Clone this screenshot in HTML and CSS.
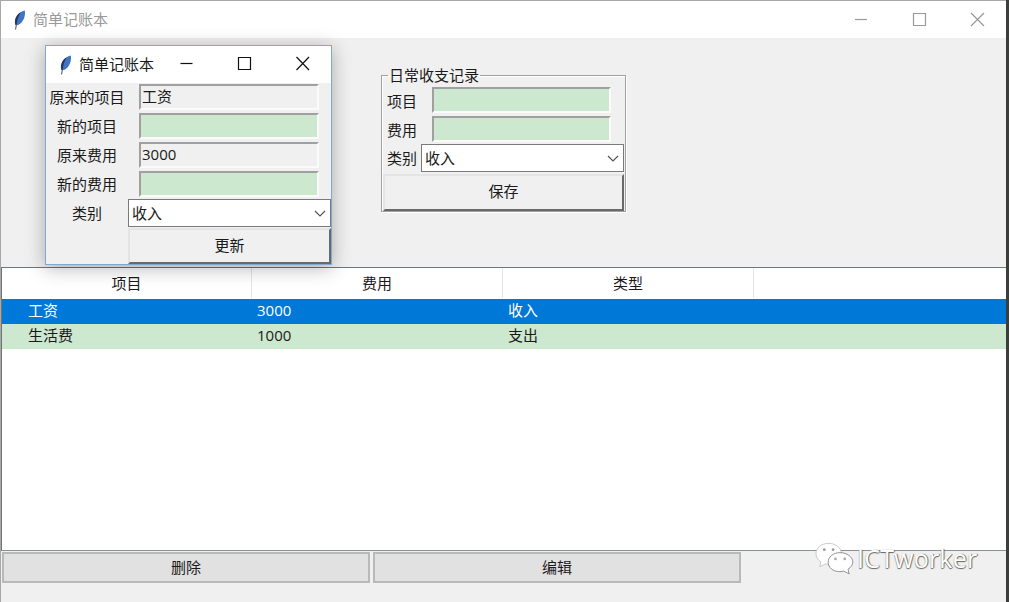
FILE: index.html
```html
<!DOCTYPE html>
<html lang="zh-CN">
<head>
    <meta charset="UTF-8">
    <title>简单记账本</title>
    <link rel="stylesheet" href="styles.css">
</head>
<body>
    <div class="window">
        <div class="titlebar">
            <svg class="feather" viewBox="0 0 16 20"><path d="M3.500 19.500 L4.500 14" stroke="#666" stroke-width="1.200" fill="none"/><path d="M3.500 15 C1.500 9.500 6 2 12.800 .5 C13.800 6.500 11 13 6 15 Z" fill="#3f74c4"/><path d="M3.500 15 C1.500 9.500 5 4 9 2 C6.500 6 5 10 4.800 14.500 Z" fill="#26385c"/></svg>
            <span class="title title-inactive">简单记账本</span>
            <div class="controls controls-inactive">
                <svg viewBox="0 0 58 37"><path d="M23 18.500 H35"/></svg>
                <svg viewBox="0 0 58 37"><path d="M23.500 12.500 H35.500 V24.500 H23.500 Z"/></svg>
                <svg viewBox="0 0 58 37"><path d="M23 12 L36 25 M36 12 L23 25"/></svg>
            </div>
        </div>

        <div class="top-panel">
            <fieldset class="record-frame">
                <legend>日常收支记录</legend>
                <div class="row"><span class="rec-label">项目</span><div class="entry entry-green"></div></div>
                <div class="row row-tight"><span class="rec-label">费用</span><div class="entry entry-green"></div></div>
                <div class="row combo-row">
                    <span class="rec-label-short">类别</span>
                    <div class="combo"><span>收入</span><svg viewBox="0 0 12 7"><path d="M1 1 L6 6 L11 1"/></svg></div>
                </div>
                <div class="btn save-btn">保存</div>
            </fieldset>
        </div>

        <div class="tree">
            <div class="tree-head">
                <div class="head-cell">项目</div>
                <div class="head-cell">费用</div>
                <div class="head-cell">类型</div>
                <div class="head-rest"></div>
            </div>
            <div class="tree-row selected"><span class="c1">工资</span><span class="c2">3000</span><span>收入</span></div>
            <div class="tree-row striped"><span class="c1">生活费</span><span class="c2">1000</span><span>支出</span></div>
        </div>

        <div class="bottom-bar">
            <div class="flat-btn">删除</div>
            <div class="flat-btn">编辑</div>
        </div>
    </div>

    <div class="popup">
        <div class="titlebar popup-bar">
            <svg class="feather" viewBox="0 0 16 20"><path d="M3.500 19.500 L4.500 14" stroke="#666" stroke-width="1.200" fill="none"/><path d="M3.500 15 C1.500 9.500 6 2 12.800 .5 C13.800 6.500 11 13 6 15 Z" fill="#3f74c4"/><path d="M3.500 15 C1.500 9.500 5 4 9 2 C6.500 6 5 10 4.800 14.500 Z" fill="#26385c"/></svg>
            <span class="title">简单记账本</span>
            <div class="controls">
                <svg viewBox="0 0 58 37"><path d="M23.500 17.500 H35.500"/></svg>
                <svg viewBox="0 0 58 37"><path d="M23.500 11.500 H35.500 V23.500 H23.500 Z"/></svg>
                <svg viewBox="0 0 58 37"><path d="M23.500 11 L36 24 M36 11 L23.500 24"/></svg>
            </div>
        </div>
        <div class="edit-grid">
            <span class="edit-label">原来的项目</span><div class="entry entry-edit">工资</div>
            <span class="edit-label">新的项目</span><div class="entry entry-edit entry-green"></div>
            <span class="edit-label">原来费用</span><div class="entry entry-edit">3000</div>
            <span class="edit-label">新的费用</span><div class="entry entry-edit entry-green"></div>
            <span class="edit-label edit-label-combo">类别</span>
            <div class="combo"><span>收入</span><svg viewBox="0 0 12 7"><path d="M1 1 L6 6 L11 1"/></svg></div>
            <span></span><div class="btn update-btn">更新</div>
        </div>
    </div>

    <div class="watermark">
        <svg viewBox="0 0 40 33">
            <path d="M14 1 C6.500 1 1 5.800 1 11.500 C1 15 3 18 6 20 L5 25 L11 22 C12.500 22.400 14 22.500 15 22.500 C22 22.500 27 17.500 27 11.500 C27 5.800 21.500 1 14 1 Z" fill="#fff" stroke="#bbb" stroke-width=".8"/>
            <path d="M25.500 10.500 C18.500 10.500 13.500 15 13.500 20.300 C13.500 25.800 18.500 30 25.500 30 C27 30 28.300 29.800 29.500 29.400 L35 32.300 L33.800 27.500 C36.800 25.700 38.800 23 38.800 20.300 C38.800 15 32.800 10.500 25.500 10.500 Z" fill="#fff" stroke="#777" stroke-width=".8"/>
            <circle cx="9.500" cy="7.500" r="1.400" fill="#999"/><circle cx="18.500" cy="7.500" r="1.400" fill="#999"/>
            <circle cx="21" cy="17" r="1.400" fill="#aaa"/><circle cx="30.500" cy="17" r="1.400" fill="#aaa"/>
        </svg>
        <span>ICTworker</span>
    </div>
</body>
</html>
```

FILE: styles.css
```css
* {
    box-sizing: border-box;
}
body {
    margin: 0;
    height: 602px;
    overflow: hidden;
    background: #3a3f3a;
    font-family: "Open Sans", "Noto Sans CJK SC", sans-serif;
    font-size: 15px;
    color: #1a1a1a;
}
.window {
    width: 1006px;
    height: 602px;
    display: flex;
    flex-direction: column;
    background: #f0f0f0;
    border-top: 1px solid #a8a8a8;
    border-left: 1px solid #a8a8a8;
}
.titlebar {
    height: 37px;
    flex: none;
    display: flex;
    align-items: center;
    background: #fff;
    padding-left: 11px;
}
.feather {
    width: 16px;
    height: 20px;
    margin-right: 5px;
}
.title {
    line-height: 20px;
    padding-bottom: 2px;
}
.title-inactive {
    color: #999;
}
.controls {
    margin-left: auto;
    display: flex;
}
.controls svg {
    width: 58px;
    height: 37px;
    fill: none;
    stroke: #111;
    stroke-width: 1.2;
}
.controls-inactive svg {
    stroke: #999;
}
.top-panel {
    height: 229px;
    flex: none;
    padding: 29px 0 0 380px;
}
.record-frame {
    width: 245px;
    height: 145px;
    margin: 0;
    padding: 4px 0 0;
    border: 1px solid #a0a0a0;
    box-shadow: 1px 1px 0 #fff, inset 1px 1px 0 #fff;
    min-inline-size: 0;
}
.record-frame legend {
    padding: 0 1px;
    margin-left: 6px;
    line-height: 16px;
}
.row {
    display: flex;
    align-items: center;
    padding-left: 5px;
    margin-bottom: 3px;
}
.row-tight {
    margin-bottom: 2px;
}
.rec-label {
    width: 45px;
}
.rec-label-short {
    width: 34px;
    padding-bottom: 2px;
}
.combo-row {
    margin-bottom: 2px;
}
.entry {
    width: 179px;
    height: 26px;
    line-height: 21px;
    padding-left: 1px;
    border: 2px solid;
    border-color: #a0a0a0 #fbfbfb #fbfbfb #a0a0a0;
    background: #f0f0f0;
}
.entry-green {
    background: #cce8cf;
}
.combo {
    width: 203px;
    height: 28px;
    display: flex;
    align-items: center;
    justify-content: space-between;
    padding: 0 4px 0 3px;
    background: #fff;
    border: 1px solid #7a7a7a;
}
.combo span {
    padding-bottom: 2px;
}
.combo svg {
    width: 12px;
    height: 7px;
    fill: none;
    stroke: #555;
    stroke-width: 1.2;
}
.btn {
    display: flex;
    align-items: center;
    justify-content: center;
    padding-bottom: 4px;
    background: #f0f0f0;
    border: 2px solid;
    border-color: #e4e4e4 #696969 #696969 #e4e4e4;
}
.save-btn {
    width: 241px;
    height: 37px;
    margin-left: 1px;
}
.tree {
    height: 284px;
    flex: none;
    background: #fff;
    border-top: 1px solid #70757a;
    border-left: 1px solid #70757a;
    border-bottom: 1px solid #8a9099;
}
.tree-head {
    display: flex;
    height: 31px;
    padding-bottom: 1px;
}
.head-cell {
    width: 251px;
    display: flex;
    align-items: center;
    justify-content: center;
    padding-bottom: 2px;
    border-right: 1px solid #e5e5e5;
}
.head-cell:first-child {
    width: 250px;
}
.head-rest {
    flex: 1;
}
.tree-row {
    display: flex;
    align-items: center;
    height: 25px;
    padding-bottom: 4px;
}
.c1 {
    width: 255px;
    padding-left: 26px;
}
.c2 {
    width: 251px;
}
.selected {
    background: #0078d7;
    color: #fff;
}
.striped {
    background: #cce8cf;
}
.bottom-bar {
    display: flex;
    gap: 3px;
    padding: 1px 0 0 1px;
}
.flat-btn {
    width: 368px;
    height: 31px;
    display: flex;
    align-items: center;
    justify-content: center;
    padding-bottom: 2px;
    background: #e1e1e1;
    border: 2px solid #b9b9b9;
}
.popup {
    position: absolute;
    left: 45px;
    top: 45px;
    width: 287px;
    height: 220px;
    background: #f0f0f0;
    border: 1px solid #7fa9d1;
    box-shadow: 0 3px 18px rgba(0, 0, 0, 0.3);
}
.popup-bar {
    padding-left: 12px;
}
.popup-bar .feather {
    margin-right: 5px;
}
.edit-grid {
    display: grid;
    grid-template-columns: 82px 203px;
    grid-template-rows: 29px 29px 29px 28px 29px 36px;
    padding-top: 1px;
}
.edit-label {
    display: flex;
    align-items: center;
    justify-content: center;
    padding-bottom: 4px;
}
.edit-label-combo {
    padding-bottom: 2px;
}
.entry-edit {
    margin-left: 11px;
    width: 180px;
}
.update-btn {
    height: 36px;
}
.watermark {
    position: absolute;
    left: 815px;
    top: 542px;
    display: flex;
    align-items: center;
    gap: 3px;
    color: #fff;
    font-family: "Open Sans", sans-serif;
    font-size: 25px;
    letter-spacing: 0.2px;
    line-height: 33px;
    text-shadow: 1px 0 1px #666, 0 1px 1px #666;
}
.watermark svg {
    width: 39px;
    height: 33px;
}
```
